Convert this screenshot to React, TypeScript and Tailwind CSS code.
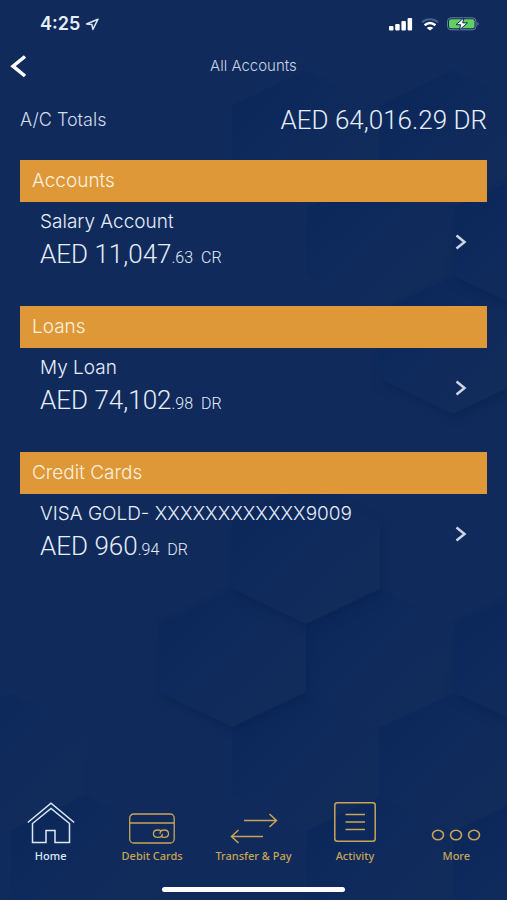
import { ReactNode } from "react"

const sections = [
  { title: "Accounts", name: "Salary Account", whole: "AED 11,047", cents: ".63", type: "CR" },
  { title: "Loans", name: "My Loan", whole: "AED 74,102", cents: ".98", type: "DR" },
  { title: "Credit Cards", name: "VISA GOLD- XXXXXXXXXXXX9009", whole: "AED 960", cents: ".94", type: "DR" },
]

// centres of the background hexagons, drawn in this order
const hexagons = [
  { x: 306, y: 139 },
  { x: 453, y: 139 },
  { x: 380, y: 242 },
  { x: 453, y: 345, shade: true },
  { x: 527, y: 242, shade: true },
  { x: 10, y: 762 },
  { x: 85, y: 864 },
  { x: 380, y: 864 },
  { x: 527, y: 864 },
  { x: 306, y: 762 },
  { x: 453, y: 762 },
  { x: 380, y: 658 },
  { x: 232, y: 658, shade: true },
  { x: 527, y: 658, shade: true },
  { x: 306, y: 555, shade: true },
]

function Background() {
  return (
    <svg
      className="absolute inset-0 -z-10 h-full w-full"
      viewBox="0 0 507 900"
      preserveAspectRatio="xMidYMid slice"
      aria-hidden="true"
    >
      <defs>
        <linearGradient id="hex" x1="0" y1="0" x2="1" y2="1">
          <stop offset="0.2" stopColor="#0c285b" />
          <stop offset="0.75" stopColor="#112b5b" />
        </linearGradient>
        <filter id="shade" x="-20%" y="-20%" width="140%" height="140%" colorInterpolationFilters="sRGB">
          <feDropShadow dx="3" dy="5" stdDeviation="4" floodColor="#08214f" floodOpacity="0.6" />
        </filter>
      </defs>
      {hexagons.map(({ x, y, shade }) => (
        <polygon
          key={`${x}-${y}`}
          points={`${x},${y - 69} ${x + 74},${y - 34} ${x + 74},${y + 34} ${x},${y + 69} ${x - 74},${y + 34} ${x - 74},${y - 34}`}
          fill="url(#hex)"
          filter={shade ? "url(#shade)" : undefined}
        />
      ))}
    </svg>
  )
}

function StatusBar() {
  return (
    <div className="flex h-12 items-center justify-between pr-7 pl-10">
      <div className="flex items-center gap-1">
        <span className="text-lg font-semibold">4:25</span>
        <svg width="16" height="13" viewBox="-1 0 15 13" fill="none" stroke="#dce6f5" strokeWidth="1.5">
          <path d="M12.5 1.2 1 6 6.4 6.6 7.4 11.4z" strokeLinejoin="round" />
        </svg>
      </div>
      <div className="flex items-center gap-2">
        <svg width="24" height="13" viewBox="0 0 24 13" fill="#fff">
          <rect x="0" y="8" width="4.5" height="4.5" rx="1" />
          <rect x="6.2" y="6" width="4.5" height="6.5" rx="1" />
          <rect x="12.4" y="3" width="4.5" height="9.5" rx="1" />
          <rect x="18.6" y="0" width="4.5" height="12.5" rx="1" />
        </svg>
        <svg width="18" height="13" viewBox="0 0 18 13" fill="none" strokeWidth="2">
          <path d="M1 4.2C5.5.4 12.5.4 17 4.2" stroke="#48618c" />
          <path d="M3.6 7.2C7 4.4 11 4.4 14.4 7.2" stroke="#fff" strokeWidth="2.6" />
          <path d="M9 12.6 5.7 10C7.6 8.400 10.400 8.400 12.300 10z" fill="#fff" />
        </svg>
        <svg width="32" height="14" viewBox="0 0 32 14">
          <rect x="0.5" y="0.8" width="28.5" height="12" rx="3.5" fill="none" stroke="#6b7f9d" />
          <path d="M30.4 5v3.8c1.6-.6 1.6-3.2 0-3.8z" fill="#6b7f9d" />
          <rect x="2" y="2.3" width="25.5" height="9" rx="2" fill="#62cf63" />
          <path d="M17 .8 9 7.7h4.6L12.4 13 20.5 5.9h-4.8z" fill="#fff" stroke="#102a5b" />
        </svg>
      </div>
    </div>
  )
}

function Amount({ whole, cents, type }: { whole: string; cents: string; type: string }) {
  return (
    <p className="font-['Roboto',sans-serif] text-[26px] leading-10 font-light">
      {whole}
      <span className="text-base">{cents}</span>
      <span className="ml-2 text-base">{type}</span>
    </p>
  )
}

function NavItem({ label, active, children }: { label: string; active?: boolean; children: ReactNode }) {
  return (
    <a
      href="#"
      aria-current={active ? "page" : undefined}
      className={`flex flex-1 flex-col items-center justify-end gap-0.5 ${active ? "text-[#dbe8f8]" : "text-[#c8a556]"}`}
    >
      {children}
      <span className="font-['Noto_Sans',sans-serif] text-[11px] leading-5 font-medium whitespace-nowrap">{label}</span>
    </a>
  )
}

export default function App() {
  return (
    <div className="relative isolate flex min-h-screen flex-col overflow-hidden bg-[#102a5b] font-['Inter',sans-serif] text-[#e6eefa]">
      <Background />
      <StatusBar />

      <header className="grid h-9 grid-cols-3 items-center px-2">
        <button type="button" aria-label="Back" className="w-6 text-white">
          <svg width="20" height="24" viewBox="0 0 20 24" fill="none" stroke="currentColor" strokeWidth="3.5">
            <path d="M17 2.5 5 12.2 17 22" />
          </svg>
        </button>
        <h1 className="text-center text-[15px] font-light whitespace-nowrap text-[#c9d4e6]">All Accounts</h1>
      </header>

      <main className="flex flex-1 flex-col px-5">
        <div className="flex h-19 items-center justify-between pb-1">
          <h2 className="text-lg font-light text-[#d3ddec]">A/C Totals</h2>
          <p className="font-['Roboto',sans-serif] text-[26px] leading-10 font-light">AED 64,016.29 DR</p>
        </div>

        {sections.map((section) => (
          <section key={section.title} className="mb-6">
            <h2 className="flex h-[42px] items-center bg-[#de9838] px-3 text-[19px] font-light text-[#fdf0df]">
              {section.title}
            </h2>
            <a href="#" className="flex h-20 items-center justify-between px-5">
              <div>
                <h3 className="text-[19px] leading-6 font-light whitespace-nowrap">{section.name}</h3>
                <Amount whole={section.whole} cents={section.cents} type={section.type} />
              </div>
              <svg width="12" height="16" viewBox="0 0 12 16" fill="none" stroke="#ccd6e6" strokeWidth="2.5">
                <path d="M1.5 1.5 9.5 8 1.5 14.5" />
              </svg>
            </a>
          </section>
        ))}
      </main>

      <nav className="flex h-20 items-stretch">
        <NavItem label="Home" active>
          <svg width="48" height="42" viewBox="0 0 48 42" fill="none" stroke="currentColor" strokeWidth="1.5">
            <path d="M.8 20.5 24 1.2 47.2 20.5" />
            <path d="M5.5 21.5V40.5H19V28.5H28V40.5H42.5V21.5L24 6.5z" />
          </svg>
        </NavItem>
        <NavItem label="Debit Cards">
          <svg width="46" height="31" viewBox="0 0 46 31" fill="none" stroke="currentColor" strokeWidth="1.3">
            <rect x="0.7" y="1" width="44.5" height="29" rx="4" />
            <path d="M.7 10H45.2" />
            <path d="M32.4 18.2c-.9-.8-2-1.2-3.4-1.2-2.700 0-4.600 1.600-4.600 3.700s1.900 3.700 4.600 3.700c2.800 0 4.400-1.700 4.400-3.700" />
            <path d="M31 20.7c0-2 1.5-3.7 4.1-3.7 2.700 0 4.400 1.600 4.400 3.700s-1.700 3.700-4.400 3.700c-1.300 0-2.300-.4-3.100-1.200" />
          </svg>
        </NavItem>
        <NavItem label="Transfer & Pay">
          <svg width="48" height="31" viewBox="0 0 48 31" fill="none" stroke="currentColor" strokeWidth="1.5">
            <path d="M14 7.5H46.5M39.5 1 46.5 7.5 39.5 14" />
            <path d="M33 23.5H1.5M8.5 17 1.5 23.5 8.5 30" />
          </svg>
        </NavItem>
        <NavItem label="Activity">
          <svg width="42" height="42" viewBox="0 0 42 42" fill="none" stroke="currentColor" strokeWidth="1.5">
            <rect x="0.8" y="0.8" width="40.4" height="38.4" rx="2.5" />
            <path d="M11.5 12.5H31M11.5 20H31M11.5 27.5H31" />
          </svg>
        </NavItem>
        <NavItem label="More">
          <svg width="50" height="15" viewBox="0 0 50 15" fill="none" stroke="currentColor" strokeWidth="1.6">
            <ellipse cx="7" cy="6" rx="5.5" ry="4.7" />
            <ellipse cx="25" cy="6" rx="5.5" ry="4.7" />
            <ellipse cx="43" cy="6" rx="5.5" ry="4.7" />
          </svg>
        </NavItem>
      </nav>

      <div className="flex h-[34px] items-center justify-center pt-4">
        <div className="mb-1 h-[5px] w-[36%] rounded-full bg-white" />
      </div>
    </div>
  )
}
